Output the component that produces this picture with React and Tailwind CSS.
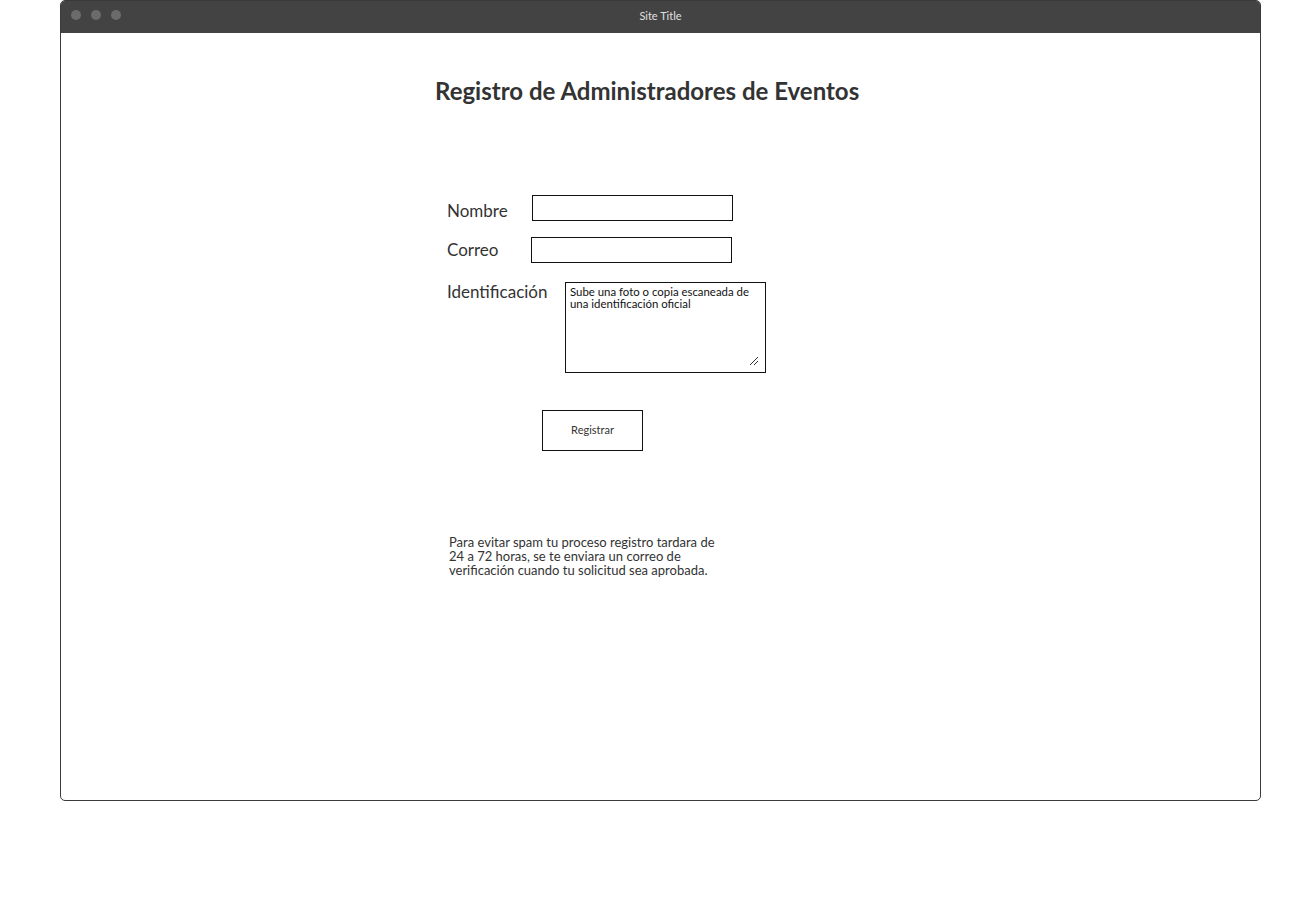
export default function App() {
  return (
    <div className="w-[1310px] h-[910px] bg-white" style={{ fontFamily: "Lato, 'Noto Sans', sans-serif" }}>
      <div className="ml-[60px] w-[1201px] h-[801px] border border-[#3a3a3a] rounded-[5px] overflow-hidden flex flex-col">
        <div className="h-[32px] bg-[#434343] relative shrink-0">
          <div className="flex gap-[10px] ml-[10px] pt-[9px]">
            <span className="w-[10px] h-[10px] rounded-full bg-[#6b6b6b]" />
            <span className="w-[10px] h-[10px] rounded-full bg-[#6b6b6b]" />
            <span className="w-[10px] h-[10px] rounded-full bg-[#6b6b6b]" />
          </div>
          <div className="absolute left-0 right-0 top-[7px] text-center text-[11px] leading-[16px] text-[#e0e0e0]">Site Title</div>
        </div>
        <div className="flex-1 flex flex-col">
          <h1 className="mt-[43px] pl-[374px] text-[24px] leading-[30px] font-bold text-[#333]">
            Registro de Administradores de Eventos
          </h1>
          <div className="ml-[386px] mt-[89px] flex flex-col">
            <div className="flex items-start">
              <span className="w-[85px] pt-[6px] text-[17px] leading-[20px] text-[#333]">Nombre</span>
              <input className="w-[201px] h-[26px] border border-[#111] outline-none" />
            </div>
            <div className="flex items-start mt-[16px]">
              <span className="w-[84px] pt-[3px] text-[17px] leading-[20px] text-[#333]">Correo</span>
              <input className="w-[201px] h-[26px] border border-[#111] outline-none" />
            </div>
            <div className="flex items-start mt-[19px]">
              <span className="w-[118px] pt-0 text-[17px] leading-[20px] text-[#333]">Identificación</span>
              <div className="relative w-[201px] h-[91px]">
                <textarea
                  className="w-full h-full resize-none border border-[#111] outline-none px-[4px] py-[3px] text-[11.4px] leading-[12px] text-[#111] block"
                  defaultValue="Sube una foto o copia escaneada de una identificación oficial"
                />
                <svg className="absolute right-[7px] bottom-[7px]" width="10" height="10" viewBox="0 0 10 10">
                  <path d="M9 1 L1 9 M9 5 L5 9" stroke="#333" strokeWidth="1" fill="none" />
                </svg>
              </div>
            </div>
            <button className="ml-[95px] mt-[37px] w-[101px] h-[41px] border border-[#111] bg-white text-[11px] text-[#333] flex items-center justify-center">
              Registrar
            </button>
            <p className="ml-[2px] mt-[84px] w-[278px] text-[13px] leading-[14px] text-[#333]">
              Para evitar spam tu proceso registro tardara de 24 a 72 horas, se te enviara un correo de verificación cuando tu solicitud sea aprobada.
            </p>
          </div>
        </div>
      </div>
    </div>
  );
}
